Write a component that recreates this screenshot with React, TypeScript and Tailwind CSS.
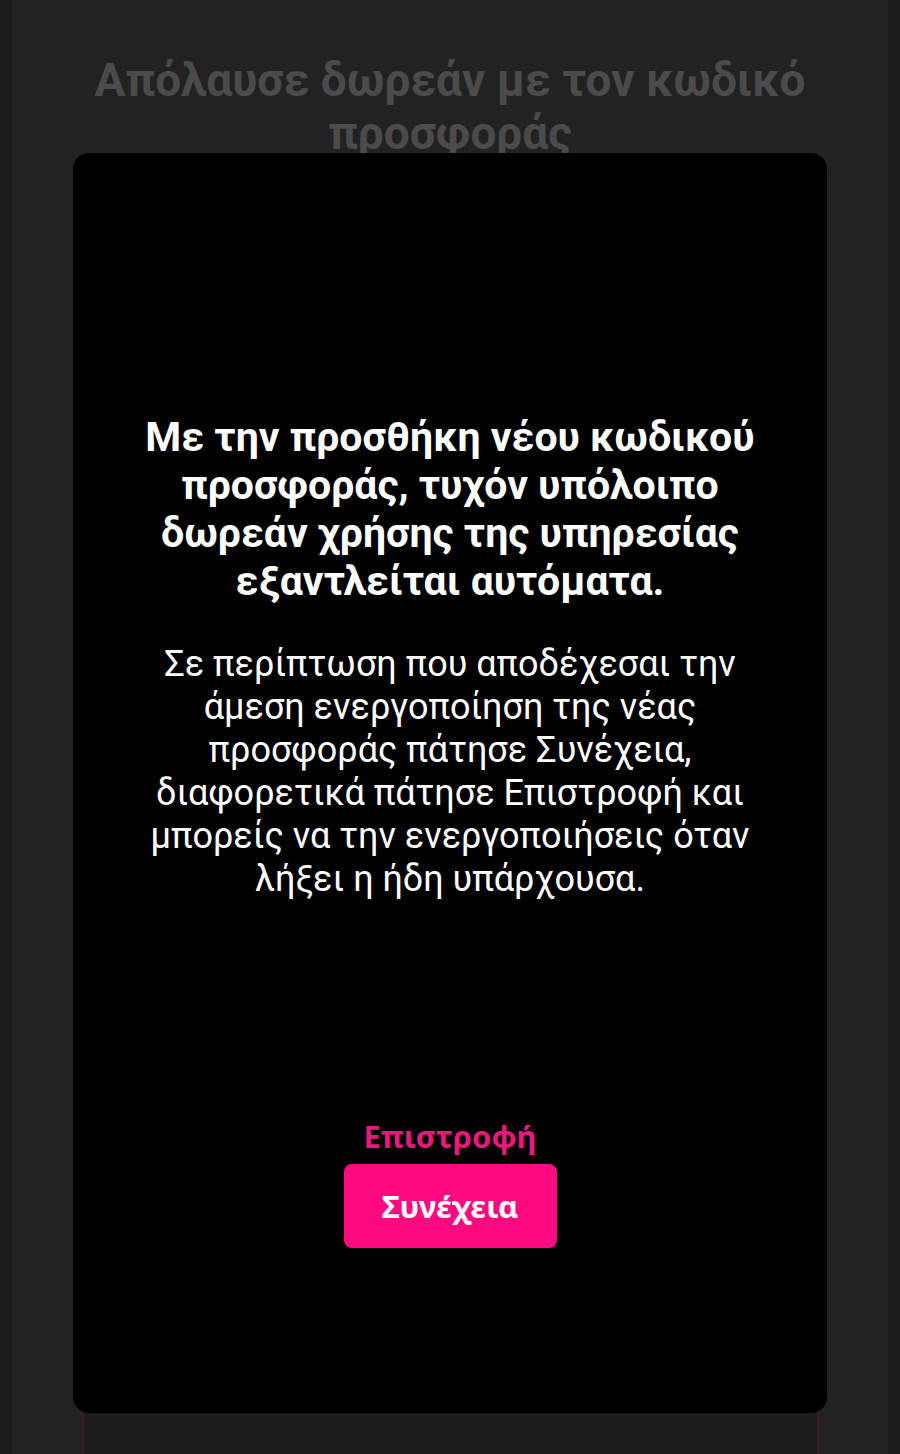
export default function App() {
  return (
    <div className="relative h-[1454px] overflow-hidden bg-[#1b1b1b] px-[12px] font-['Roboto','Liberation_Sans',sans-serif]">
      {/* page under the dialog, dimmed */}
      <div className="flex h-full flex-col items-center bg-[#222222] pt-[54px]">
        <h1 className="px-[40px] text-center text-[46px] font-bold leading-[53px] text-[#4b4b4b]">
          Απόλαυσε δωρεάν με τον κωδικό
          <br />
          προσφοράς
        </h1>
        <div className="mt-auto h-[80px] w-[737px] border-x-2 border-[#3a1929] bg-[#1d1d1d]" />
      </div>

      {/* dialog */}
      <div className="absolute left-[73px] top-[153px] flex h-[1260px] w-[754px] flex-col items-center rounded-[16px] bg-black px-[40px] pb-[165px] pt-[260px] text-center text-white">
        <h2 className="text-[41px] font-bold leading-[48px]">
          Με την προσθήκη νέου κωδικού
          <br />
          προσφοράς, τυχόν υπόλοιπο
          <br />
          δωρεάν χρήσης της υπηρεσίας
          <br />
          εξαντλείται αυτόματα.
        </h2>
        <p className="mt-[38px] text-[36px] leading-[43px]">
          Σε περίπτωση που αποδέχεσαι την
          <br />
          άμεση ενεργοποίηση της νέας
          <br />
          προσφοράς πάτησε Συνέχεια,
          <br />
          διαφορετικά πάτησε Επιστροφή και
          <br />
          μπορείς να την ενεργοποιήσεις όταν
          <br />
          λήξει η ήδη υπάρχουσα.
        </p>
        <button className="mt-auto h-[40px] font-['Noto_Sans','DejaVu_Sans',sans-serif] text-[31px] font-bold leading-[40px] text-[#e6197d]">
          Επιστροφή
        </button>
        <button className="mt-[8px] h-[84px] w-[213px] shrink-0 rounded-[8px] bg-[#ff0a80] font-['Noto_Sans','DejaVu_Sans',sans-serif] text-[31px] font-bold text-white">
          Συνέχεια
        </button>
      </div>
    </div>
  );
}
